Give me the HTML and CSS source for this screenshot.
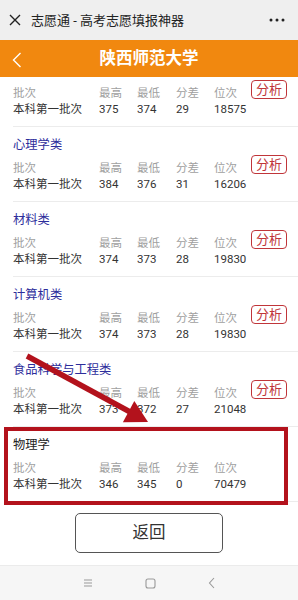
FILE: index.html
```html
<!DOCTYPE html>
<html lang="zh">
<head>
<meta charset="utf-8">
<link rel="stylesheet" href="styles.css">
</head>
<body>
<div class="page">
  <div class="topbar">
    <svg class="close" width="12" height="12" viewBox="0 0 12 12"><path d="M1 1L11 11M11 1L1 11" stroke="#222" stroke-width="1.4" fill="none"/></svg>
    <span class="toptitle">志愿通 - 高考志愿填报神器</span>
    <svg class="more" width="16" height="4" viewBox="0 0 16 4"><circle cx="2" cy="2" r="1.5" fill="#222"/><circle cx="8" cy="2" r="1.5" fill="#222"/><circle cx="14" cy="2" r="1.5" fill="#222"/></svg>
  </div>
  <div class="header">
    <svg class="back" width="10" height="16" viewBox="0 0 10 16"><path d="M8.5 1L1.5 8L8.5 15" stroke="#fff" stroke-width="1.4" fill="none"/></svg>
    <span class="htitle">陕西师范大学</span>
  </div>
  <div class="content">
    <div class="item first">
      <div class="grid">
        <span class="lbl">批次</span><span class="lbl">最高</span><span class="lbl">最低</span><span class="lbl">分差</span><span class="lbl">位次</span>
        <span class="btn">分析</span>
        <span class="val">本科第一批次</span><span class="val">375</span><span class="val">374</span><span class="val">29</span><span class="val">18575</span>
      </div>
    </div>
    <div class="item">
      <div class="name">心理学类</div>
      <div class="grid">
        <span class="lbl">批次</span><span class="lbl">最高</span><span class="lbl">最低</span><span class="lbl">分差</span><span class="lbl">位次</span>
        <span class="btn">分析</span>
        <span class="val">本科第一批次</span><span class="val">384</span><span class="val">376</span><span class="val">31</span><span class="val">16206</span>
      </div>
    </div>
    <div class="item">
      <div class="name">材料类</div>
      <div class="grid">
        <span class="lbl">批次</span><span class="lbl">最高</span><span class="lbl">最低</span><span class="lbl">分差</span><span class="lbl">位次</span>
        <span class="btn">分析</span>
        <span class="val">本科第一批次</span><span class="val">374</span><span class="val">373</span><span class="val">28</span><span class="val">19830</span>
      </div>
    </div>
    <div class="item">
      <div class="name">计算机类</div>
      <div class="grid">
        <span class="lbl">批次</span><span class="lbl">最高</span><span class="lbl">最低</span><span class="lbl">分差</span><span class="lbl">位次</span>
        <span class="btn">分析</span>
        <span class="val">本科第一批次</span><span class="val">374</span><span class="val">373</span><span class="val">28</span><span class="val">19830</span>
      </div>
    </div>
    <div class="item">
      <div class="name">食品科学与工程类</div>
      <div class="grid">
        <span class="lbl">批次</span><span class="lbl">最高</span><span class="lbl">最低</span><span class="lbl">分差</span><span class="lbl">位次</span>
        <span class="btn">分析</span>
        <span class="val">本科第一批次</span><span class="val">373</span><span class="val">372</span><span class="val">27</span><span class="val">21048</span>
      </div>
    </div>
    <div class="item">
      <div class="name dark">物理学</div>
      <div class="grid">
        <span class="lbl">批次</span><span class="lbl">最高</span><span class="lbl">最低</span><span class="lbl">分差</span><span class="lbl">位次</span>
        <span class="val">本科第一批次</span><span class="val">346</span><span class="val">345</span><span class="val">0</span><span class="val">70479</span>
      </div>
    </div>
    <div class="actions">
      <span class="backbtn">返回</span>
    </div>
  </div>
  <div class="navbar">
    <svg width="10" height="10" viewBox="0 0 10 10"><path d="M1 2H9M1 5H9M1 8H9" stroke="#999" stroke-width="1" fill="none"/></svg>
    <svg width="11" height="11" viewBox="0 0 11 11"><rect x="1" y="1" width="9" height="9" rx="2" stroke="#999" stroke-width="1.1" fill="none"/></svg>
    <svg width="8" height="12" viewBox="0 0 8 12"><path d="M6 1L1.5 6L6 11" stroke="#999" stroke-width="1.1" fill="none"/></svg>
  </div>
  <div class="highlight"></div>
  <svg class="arrow" width="298" height="600" viewBox="0 0 298 600">
    <line x1="27" y1="356" x2="132" y2="413" stroke="#b3121c" stroke-width="5.5"/>
    <polygon points="148,422 122.9,422.2 134.3,401" fill="#b3121c"/>
  </svg>
</div>
</body>
</html>
```
FILE: styles.css
```css
* { box-sizing: border-box; }
html, body { margin: 0; padding: 0; }
body {
  font-family: Roboto, "Noto Sans CJK SC", sans-serif;
  background: #fff;
}
.page {
  position: relative;
  width: 298px;
  height: 600px;
  display: flex;
  flex-direction: column;
  overflow: hidden;
}
.topbar {
  height: 40px;
  background: #efefef;
  display: flex;
  align-items: center;
  padding: 0 13px 0 9px;
}
.close { margin-right: 10px; }
.toptitle {
  font-size: 13px;
  color: #222;
  flex: 1;
  line-height: 16px;
  padding-top: 1px;
}
.header {
  height: 37px;
  background: #f1880f;
  display: flex;
  align-items: center;
  justify-content: center;
  position: relative;
}
.back { position: absolute; left: 12px; top: 12px; }
.htitle {
  color: #fff;
  font-size: 16.5px;
  font-weight: bold;
  line-height: 20px;
}
.content {
  flex: 1;
  display: flex;
  flex-direction: column;
}
.item {
  margin-left: 13px;
  border-bottom: 1px solid #ececec;
  padding: 8px 0 9px;
}
.name {
  font-size: 12.3px;
  line-height: 20px;
  color: #2d2d9b;
  margin-bottom: 5px;
}
.name.dark { color: #222; }
.grid {
  display: grid;
  grid-template-columns: 86px 38px 39px 38px 37px 36px;
  grid-template-rows: 16px 16px;
}
.lbl {
  grid-row: 1;
  font-size: 11.5px;
  line-height: 16px;
  color: #a0a0a0;
  white-space: nowrap;
}
.val {
  grid-row: 2;
  font-size: 11.5px;
  line-height: 16px;
  color: #333;
  white-space: nowrap;
}
.btn {
  grid-column: 6;
  grid-row: 1 / span 2;
  align-self: start;
  margin-top: -5px;
  height: 19px;
  border: 1px solid #c0353a;
  border-radius: 4px;
  color: #c0353a;
  font-size: 13px;
  line-height: 17px;
  text-align: center;
}
.actions {
  display: flex;
  justify-content: center;
  padding-top: 11px;
}
.backbtn {
  width: 148px;
  height: 40px;
  border: 1px solid #555;
  border-radius: 5px;
  font-size: 16.5px;
  line-height: 38px;
  text-align: center;
  color: #333;
}
.navbar {
  height: 35px;
  background: #f6f6f6;
  border-top: 1px solid #ebebeb;
  display: flex;
  align-items: center;
  justify-content: center;
  gap: 52px;
}
.highlight {
  position: absolute;
  left: 4px;
  top: 427px;
  width: 284px;
  height: 78px;
  border: 4px solid #b3121c;
}
.arrow {
  position: absolute;
  left: 0;
  top: 0;
}
```
